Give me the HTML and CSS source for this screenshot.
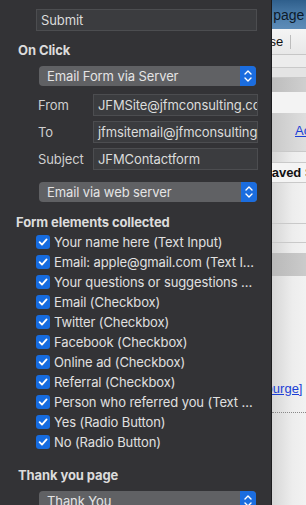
FILE: index.html
```html
<!DOCTYPE html>
<html lang="en">

<head>
    <meta charset="UTF-8" />
    <title>Form Inspector</title>
    <link rel="stylesheet" href="styles.css">
</head>

<body>
    <div class="screen">
        <div class="inspector">
            <div class="field submit-field">Submit</div>

            <h3 class="section-title on-click">On Click</h3>
            <div class="popup">
                <span class="popup-label">Email Form via Server</span>
                <span class="stepper">
                    <svg width="16" height="20" viewBox="0 0 16 20">
                        <path d="M5 8 L8 5 L11 8 M5 12 L8 15 L11 12" fill="none" stroke="#fff" stroke-width="1.4" stroke-linecap="round" stroke-linejoin="round" />
                    </svg>
                </span>
            </div>

            <div class="mail-rows">
                <div class="mail-row">
                    <span class="mail-label">From</span>
                    <div class="field mail-field">JFMSite@jfmconsulting.com</div>
                </div>
                <div class="mail-row">
                    <span class="mail-label">To</span>
                    <div class="field mail-field">jfmsitemail@jfmconsulting.com</div>
                </div>
                <div class="mail-row">
                    <span class="mail-label">Subject</span>
                    <div class="field mail-field">JFMContactform</div>
                </div>
            </div>

            <div class="popup popup-server">
                <span class="popup-label">Email via web server</span>
                <span class="stepper">
                    <svg width="16" height="20" viewBox="0 0 16 20">
                        <path d="M5 8 L8 5 L11 8 M5 12 L8 15 L11 12" fill="none" stroke="#fff" stroke-width="1.4" stroke-linecap="round" stroke-linejoin="round" />
                    </svg>
                </span>
            </div>

            <h3 class="section-title collected">Form elements collected</h3>
            <ul class="element-list" id="element-list"></ul>

            <h3 class="section-title thanks">Thank you page</h3>
            <div class="popup">
                <span class="popup-label">Thank You</span>
                <span class="stepper">
                    <svg width="16" height="20" viewBox="0 0 16 20">
                        <path d="M5 8 L8 5 L11 8 M5 12 L8 15 L11 12" fill="none" stroke="#fff" stroke-width="1.4" stroke-linecap="round" stroke-linejoin="round" />
                    </svg>
                </span>
            </div>
        </div>

        <div class="page">
            <div class="page-header"><span class="clip-text">Home page</span></div>
            <div class="page-toolbar">
                <span class="clip-text">Close</span>
                <span class="toolbar-sep"></span>
            </div>
            <div class="band band-light"></div>
            <div class="band band-mid"></div>
            <div class="band band-gray"></div>
            <div class="band band-white"></div>
            <div class="band band-link"><a class="page-link" href="#">Account</a></div>
            <div class="band band-thin"></div>
            <div class="band band-saved"><span class="clip-text saved">Saved Settings</span></div>
            <div class="band band-tall"></div>
            <div class="band band-mid2"></div>
            <div class="band band-thin2"></div>
            <div class="band band-gray2"></div>
            <div class="page-rest">
                <a class="page-link purge" href="#">[purge]</a>
                <div class="dotted"></div>
            </div>
        </div>
    </div>

    <script>
        const elements = [
            'Your name here (Text Input)',
            'Email: apple@gmail.com (Text Input)',
            'Your questions or suggestions here (Text Area)',
            'Email (Checkbox)',
            'Twitter (Checkbox)',
            'Facebook (Checkbox)',
            'Online ad (Checkbox)',
            'Referral (Checkbox)',
            'Person who referred you (Text Input)',
            'Yes (Radio Button)',
            'No (Radio Button)'
        ];

        const list = document.getElementById('element-list');
        elements.forEach(name => {
            const item = document.createElement('li');
            item.innerHTML = `<span class="check"><svg width="14" height="14" viewBox="0 0 14 14"><path d="M3.6 7.2 L6 9.6 L10.6 4.4" fill="none" stroke="#fff" stroke-width="1.8" stroke-linecap="round" stroke-linejoin="round"/></svg></span><span class="item-name">${name}</span>`;
            list.appendChild(item);
        });
    </script>
</body>

</html>
```

FILE: styles.css
```css
* {
    box-sizing: border-box;
    margin: 0;
    padding: 0;
}

html,
body {
    width: 306px;
    height: 505px;
    overflow: hidden;
    font-family: 'Inter', 'Noto Sans', sans-serif;
    font-size: 13px;
}

.screen {
    display: flex;
    height: 505px;
}

/* inspector panel */

.inspector {
    width: 272px;
    flex-shrink: 0;
    background-color: #333336;
    border-right: 1px solid #1c1c1e;
    color: #dedede;
    padding-top: 9px;
    letter-spacing: -0.1px;
}

.field {
    height: 22px;
    line-height: 20px;
    padding: 0 4px;
    background-color: #3b3c3f;
    border: 1px solid #4c4d50;
    color: #dcdcdc;
    white-space: nowrap;
    overflow: hidden;
}

.submit-field {
    margin-left: 36px;
    width: 221px;
}

.section-title {
    font-size: 13px;
    font-weight: 700;
    line-height: 16px;
    color: #dcdcdc;
}

.on-click {
    margin: 11px 0 0 18px;
}

.popup {
    display: flex;
    margin-left: 39px;
    width: 217px;
    height: 20px;
    background-color: #606164;
    border-radius: 4px;
    overflow: hidden;
}

.on-click + .popup {
    margin-top: 8px;
}

.popup-label {
    flex: 1;
    padding-left: 8px;
    line-height: 20px;
    color: #e4e4e4;
}

.stepper {
    width: 16px;
    background-color: #1b6ddf;
    display: flex;
}

.mail-rows {
    margin-top: 8px;
    display: flex;
    flex-direction: column;
    gap: 5px;
}

.mail-row {
    display: flex;
    align-items: center;
}

.mail-label {
    width: 93px;
    padding-left: 38px;
    color: #cfcfcf;
}

.mail-field {
    width: 165px;
}

.popup-server {
    margin-top: 12px;
    width: 218px;
}

.collected {
    margin: 12px 0 0 16px;
}

.element-list {
    list-style: none;
    margin-top: 2px;
}

.element-list li {
    display: flex;
    align-items: center;
    height: 20px;
    padding-left: 36px;
}

.check {
    width: 14px;
    height: 14px;
    border-radius: 3px;
    background-color: #166ce0;
    display: flex;
    flex-shrink: 0;
}

.item-name {
    margin-left: 4px;
    width: 202px;
    white-space: nowrap;
    overflow: hidden;
    text-overflow: ellipsis;
    color: #e0e0e0;
}

.thanks {
    margin: 15px 0 0 18px;
}

.thanks + .popup {
    margin-top: 8px;
}

/* page behind the panel */

.page {
    flex: 1;
    overflow: hidden;
    font-family: 'Liberation Sans', Arial, sans-serif;
    font-size: 12px;
    color: #111;
    background: linear-gradient(90deg, #d6d6d6, #ededed 60%, #f2f2f2);
}

.clip-text {
    display: block;
    white-space: nowrap;
}

.page-header {
    height: 29px;
    background: linear-gradient(#2f5f8c, #4f80ad 60%, #5d8cb8);
    font-size: 14px;
    line-height: 30px;
    color: #0d1a2a;
}

.page-header .clip-text {
    margin-left: -40px;
}

.page-toolbar {
    height: 26px;
    display: flex;
    align-items: center;
    background: linear-gradient(#f4f4f4, #e8e8e8);
    border-bottom: 1px solid #c6c6c6;
    font-size: 13px;
}

.page-toolbar .clip-text {
    margin-left: -22px;
}

.toolbar-sep {
    width: 1px;
    height: 14px;
    margin-left: 7px;
    background-color: #bdbdbd;
}

.band {
    border-bottom: 1px solid #c9c9c9;
}

.band-light {
    height: 13px;
    background-color: #ececec;
}

.band-mid {
    height: 10px;
    background-color: #e4e4e4;
}

.band-gray {
    height: 14px;
    background: linear-gradient(90deg, #bdbdbd, #cfcfcf);
    border-bottom: none;
}

.band-white {
    height: 21px;
    background-color: #f3f3f3;
    border-bottom: none;
}

.band-link {
    height: 39px;
    background: linear-gradient(90deg, #c9c9c9, #dedede);
    padding: 10px 0 0 23px;
}

.page-link {
    color: #1b3fd6;
    font-size: 13px;
    white-space: nowrap;
}

.band-thin {
    height: 11px;
}

.band-saved {
    height: 20px;
    background-color: #f4f4f4;
    font-weight: 700;
    font-size: 13px;
    line-height: 19px;
}

.saved {
    margin-left: -9px;
}

.band-tall {
    height: 41px;
}

.band-mid2 {
    height: 19px;
}

.band-thin2 {
    height: 10px;
    border-bottom: none;
}

.band-gray2 {
    height: 23px;
    background: linear-gradient(90deg, #b9b9b9, #cbcbcb);
    border-bottom: none;
}

.page-rest {
    padding-top: 105px;
}

.purge {
    display: block;
    margin-left: -10px;
}

.dotted {
    margin-top: 16px;
    border-top: 1px dotted #888;
}
```
